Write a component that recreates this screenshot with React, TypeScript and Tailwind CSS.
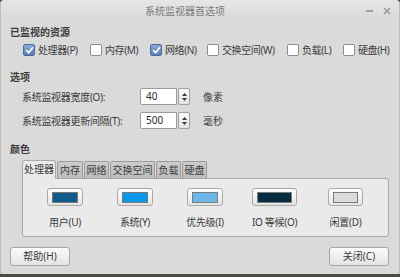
import React from "react";

const font = { fontFamily: "'Noto Sans','Noto Sans CJK SC',sans-serif" };

function Check({ checked, label, w }: { checked?: boolean; label: string; w: string }) {
  return (
    <div className={`flex items-center gap-[3px] shrink-0 whitespace-nowrap ${w}`}>
      {checked ? (
        <div className="w-[12px] h-[12px] shrink-0 rounded-[2px] border border-[#4a6c9c] bg-gradient-to-b from-[#8aaad6] to-[#5a80b8] flex items-center justify-center">
          <svg width="9" height="9" viewBox="0 0 9 9">
            <path d="M1.5 4.5 L3.6 6.8 L7.6 1.8" stroke="#ffffff" strokeWidth="1.6" fill="none" strokeLinecap="round" strokeLinejoin="round" />
          </svg>
        </div>
      ) : (
        <div className="w-[12px] h-[12px] shrink-0 rounded-[2px] border border-[#8e8e8e] bg-white" />
      )}
      <span className="text-[10px] leading-[14px] text-[#3c3c3c] tracking-[-0.4px]">{label}</span>
    </div>
  );
}

function Spin({ value }: { value: string }) {
  return (
    <div className="flex items-stretch h-[17px] shrink-0">
      <div className="w-[37px] h-full bg-white border border-[#9a9a9a] rounded-l-[2px] text-[10px] leading-[15px] pl-[5px] text-[#2a2a2a]">
        {value}
      </div>
      <div className="w-[12px] h-full ml-[1px] border border-[#a0a0a0] rounded-[2px] bg-gradient-to-b from-[#fafafa] to-[#e2e2e2] flex flex-col items-center justify-center gap-[2px]">
        <svg width="5" height="3" viewBox="0 0 5 3"><path d="M0 3 L2.5 0 L5 3 Z" fill="#3a3a3a" /></svg>
        <svg width="5" height="3" viewBox="0 0 5 3"><path d="M0 0 L2.5 3 L5 0 Z" fill="#3a3a3a" /></svg>
      </div>
    </div>
  );
}

function Swatch({ color, label, w, x }: { color: string; label: string; w: number; x: string }) {
  return (
    <div className={`flex flex-col items-center shrink-0 ${x}`} style={{ width: w }}>
      <div
        className="h-[18px] rounded-[3px] border border-[#a9a9a9] bg-gradient-to-b from-[#fdfdfd] to-[#e6e6e6] flex items-center justify-center"
        style={{ width: w }}
      >
        <div className="h-[11px] border border-[#7a7a7a]" style={{ width: w - 10, background: color }} />
      </div>
      <div className="text-[10px] leading-[14px] text-[#3c3c3c] mt-[9px] whitespace-nowrap tracking-[-0.3px]">{label}</div>
    </div>
  );
}

export default function App() {
  const tabs: [string, string][] = [
    ["处理器", "w-[34px]"],
    ["内存", "w-[26px]"],
    ["网络", "w-[25px]"],
    ["交换空间", "w-[45px]"],
    ["负载", "w-[25px]"],
    ["硬盘", "w-[25px]"],
  ];
  return (
    <div className="w-[400px] h-[277px] bg-[#4a4a46] overflow-hidden" style={font}>
      <div className="w-[400px] h-[274px] bg-[#dadada] rounded-t-[4px] border-x border-[#bdbdbd] flex flex-col">
        {/* title bar */}
        <div className="h-[22px] shrink-0 flex items-center bg-gradient-to-b from-[#e6e6e6] to-[#d9d9d9] rounded-t-[4px]">
          <div className="pl-[144px] text-[10px] text-[#7b7b7b] leading-[14px] whitespace-nowrap">系统监视器首选项</div>
          <div className="ml-auto flex items-center gap-[10px] pr-[8px]">
            <div className="w-[7px] h-[2px] bg-[#a2a2a2]" />
            <svg width="8" height="8" viewBox="0 0 8 8">
              <path d="M1 1 L7 7 M7 1 L1 7" stroke="#9a9a9a" strokeWidth="1.6" />
            </svg>
          </div>
        </div>

        <div className="px-[9px] flex flex-col">
          <div className="mt-[3px] text-[10px] leading-[14px] font-bold text-[#3a3a3a]">已监视的资源</div>
          <div className="mt-[4px] ml-[13px] flex items-center">
            <Check checked label="处理器(P)" w="w-[67px]" />
            <Check label="内存(M)" w="w-[60px]" />
            <Check checked label="网络(N)" w="w-[57px]" />
            <Check label="交换空间(W)" w="w-[80px]" />
            <Check label="负载(L)" w="w-[56px]" />
            <Check label="硬盘(H)" w="w-[48px]" />
          </div>

          <div className="mt-[13px] text-[10px] leading-[14px] font-bold text-[#3a3a3a]">选项</div>
          <div className="mt-[4px] ml-[12px] flex flex-col gap-[7px]">
            <div className="flex items-center">
              <div className="w-[118px] shrink-0 whitespace-nowrap text-[10px] leading-[14px] text-[#3c3c3c] tracking-[-0.3px]">系统监视器宽度(O):</div>
              <Spin value="40" />
              <div className="ml-[13px] text-[10px] leading-[14px] text-[#3c3c3c]">像素</div>
            </div>
            <div className="flex items-center">
              <div className="w-[118px] shrink-0 whitespace-nowrap text-[10px] leading-[14px] text-[#3c3c3c] tracking-[-0.3px]">系统监视器更新间隔(T):</div>
              <Spin value="500" />
              <div className="ml-[13px] text-[10px] leading-[14px] text-[#3c3c3c]">毫秒</div>
            </div>
          </div>

          <div className="mt-[13px] text-[10px] leading-[14px] font-bold text-[#3a3a3a]">颜色</div>
          <div className="mt-[4px] ml-[12px] mr-[1px] flex flex-col">
            <div className="flex items-end h-[18px]">
              {tabs.map(([t, w], i) =>
                i === 0 ? (
                  <div
                    key={t}
                    className={`${w} h-[19px] -mb-[1px] rounded-t-[3px] border border-b-0 border-[#a8a8a8] bg-[#eaeaea] text-[10px] leading-[17px] text-[#3c3c3c] text-center relative z-10 whitespace-nowrap`}
                  >
                    {t}
                  </div>
                ) : (
                  <div
                    key={t}
                    className={`${w} h-[17px] ml-[1px] rounded-t-[2px] border border-b-0 border-[#9a9a9a] bg-gradient-to-b from-[#cdcdcd] to-[#bdbdbd] text-[10px] leading-[16px] text-[#3c3c3c] text-center whitespace-nowrap`}
                  >
                    {t}
                  </div>
                )
              )}
            </div>
            <div className="h-[59px] bg-[#eaeaea] border border-[#a8a8a8] rounded-b-[3px] rounded-tr-[3px] flex items-start pt-[9px] pl-[24px]">
              <Swatch color="#105b8c" label="用户(U)" w={36} x="" />
              <Swatch color="#0a96e8" label="系统(Y)" w={36} x="ml-[34px]" />
              <Swatch color="#6cb7e8" label="优先级(I)" w={36} x="ml-[34px]" />
              <Swatch color="#062d40" label="IO 等候(O)" w={45} x="ml-[29px]" />
              <Swatch color="#dcdcdc" label="闲置(D)" w={35} x="ml-[31px]" />
            </div>
          </div>

          <div className="mt-[10px] flex justify-between">
            <div className="w-[60px] h-[19px] rounded-[3px] border border-[#a6a6a6] bg-gradient-to-b from-[#fbfbfb] to-[#e4e4e4] text-[10px] leading-[17px] text-[#3c3c3c] text-center">
              帮助(H)
            </div>
            <div className="w-[60px] h-[19px] mr-[1px] rounded-[3px] border border-[#a6a6a6] bg-gradient-to-b from-[#fbfbfb] to-[#e4e4e4] text-[10px] leading-[17px] text-[#3c3c3c] text-center">
              关闭(C)
            </div>
          </div>
        </div>
      </div>
    </div>
  );
}
